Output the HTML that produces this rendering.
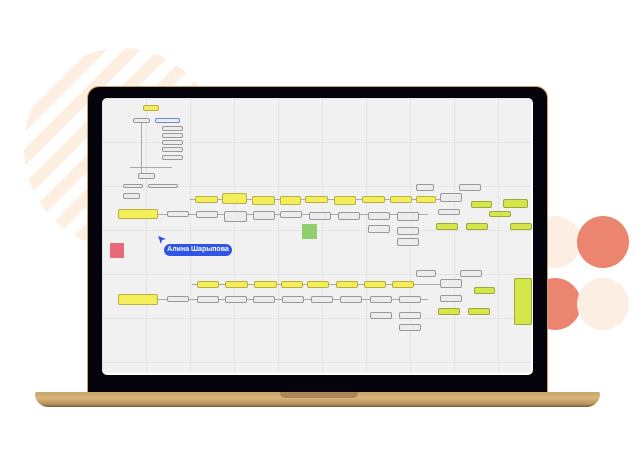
<!DOCTYPE html><html><head><meta charset="utf-8"><style>
*{margin:0;padding:0;box-sizing:border-box}
body{width:638px;height:458px;background:#fff;position:relative;overflow:hidden;font-family:"Liberation Sans",sans-serif}
.a{position:absolute}
.y{position:absolute;background:#f3ee5a;border:1px solid #b9b040;border-radius:2px;height:9px}
.g{position:absolute;background:#ececec;border:1px solid #999;border-radius:2px;height:8px}
.l{position:absolute;background:#d4e64a;border:1px solid #9aa93a;border-radius:2px;height:8px}
.h{position:absolute;height:1px;background:#aaa}
</style></head><body>
<div class="a" style="left:24px;top:48px;width:196px;height:200px;border-radius:50%;background:repeating-linear-gradient(135deg,#fdeee2 0 12px,#fff 12px 24px)"></div>
<div class="a" style="left:529px;top:216px;width:52px;height:52px;border-radius:50%;background:#fdeee4"></div>
<div class="a" style="left:577px;top:216px;width:52px;height:52px;border-radius:50%;background:#eb8570"></div>
<div class="a" style="left:529px;top:278px;width:52px;height:52px;border-radius:50%;background:#eb8570"></div>
<div class="a" style="left:577px;top:278px;width:52px;height:52px;border-radius:50%;background:#fdeee4"></div>
<!-- laptop -->
<div class="a" style="left:87px;top:86px;width:461px;height:308px;background:#05040c;border-radius:12px 12px 0 0;border:1px solid #c9a16a;border-bottom:none"></div>
<div class="a" style="left:102px;top:98px;width:431px;height:277px;background:#f1f1f1;border-radius:5px;overflow:hidden;background-image:linear-gradient(90deg,#e4e4e4 1px,transparent 1px),linear-gradient(#e4e4e4 1px,transparent 1px);background-size:44px 44px;border-right:2px solid #fff;border-bottom:2px solid #fff">
</div>
<div class="a" style="left:35px;top:392px;width:565px;height:15px;background:linear-gradient(#c9a36a,#d9b57b 40%,#b8925c 80%,#6f5a3c);border-radius:2px 2px 14px 14px"></div>
<div class="a" style="left:280px;top:392px;width:78px;height:6px;background:#a98757;border-radius:0 0 5px 5px"></div>
<!-- diagram -->
<div class="y" style="left:143px;top:105px;width:16px;height:6px"></div>
<div class="g" style="left:133px;top:118px;width:17px;height:5px"></div>
<div class="g" style="left:155px;top:118px;width:25px;height:5px;border-color:#6b8ad9"></div>
<div class="g" style="left:162px;top:126px;width:21px;height:5px"></div>
<div class="g" style="left:162px;top:133px;width:21px;height:5px"></div>
<div class="g" style="left:162px;top:140px;width:21px;height:5px"></div>
<div class="g" style="left:162px;top:147px;width:21px;height:5px"></div>
<div class="g" style="left:162px;top:155px;width:21px;height:5px"></div>
<div class="a" style="left:141px;top:123px;width:1px;height:50px;background:#aaa"></div>
<div class="h" style="left:130px;top:167px;width:42px"></div>
<div class="g" style="left:138px;top:173px;width:17px;height:6px"></div>
<div class="g" style="left:123px;top:184px;width:20px;height:4px"></div>
<div class="g" style="left:148px;top:184px;width:30px;height:4px"></div>
<div class="g" style="left:123px;top:193px;width:17px;height:6px"></div>
<div class="y" style="left:118px;top:209px;width:40px;height:10px"></div>
<div class="h" style="left:158px;top:214px;width:270px"></div>
<div class="g" style="left:167px;top:211px;width:22px;height:6px"></div>
<div class="h" style="left:190px;top:199px;width:250px"></div>
<div class="y" style="left:195px;top:196px;width:23px;height:7px"></div>
<div class="y" style="left:222px;top:193px;width:25px;height:11px"></div>
<div class="y" style="left:252px;top:196px;width:23px"></div>
<div class="y" style="left:280px;top:196px;width:21px"></div>
<div class="y" style="left:305px;top:196px;width:23px;height:7px"></div>
<div class="y" style="left:334px;top:196px;width:22px"></div>
<div class="y" style="left:362px;top:196px;width:23px;height:7px"></div>
<div class="y" style="left:390px;top:196px;width:22px;height:7px"></div>
<div class="y" style="left:416px;top:196px;width:20px;height:7px"></div>
<div class="g" style="left:196px;top:211px;width:22px;height:7px"></div>
<div class="g" style="left:224px;top:211px;width:23px;height:11px"></div>
<div class="g" style="left:253px;top:211px;width:22px;height:9px"></div>
<div class="g" style="left:280px;top:211px;width:22px;height:7px"></div>
<div class="g" style="left:309px;top:212px;width:22px"></div>
<div class="g" style="left:338px;top:212px;width:22px"></div>
<div class="g" style="left:368px;top:212px;width:22px"></div>
<div class="g" style="left:397px;top:212px;width:22px;height:9px"></div>
<div class="g" style="left:368px;top:225px;width:22px"></div>
<div class="g" style="left:397px;top:227px;width:22px"></div>
<div class="g" style="left:397px;top:238px;width:22px"></div>
<div class="a" style="left:302px;top:224px;width:15px;height:15px;background:#8fcf6e"></div>
<div class="a" style="left:110px;top:243px;width:14px;height:15px;background:#e66a7a"></div>
<div class="g" style="left:416px;top:184px;width:18px;height:7px"></div>
<div class="g" style="left:459px;top:184px;width:22px;height:7px"></div>
<div class="g" style="left:440px;top:193px;width:22px;height:9px"></div>
<div class="g" style="left:438px;top:209px;width:22px;height:6px"></div>
<div class="l" style="left:471px;top:201px;width:21px;height:7px"></div>
<div class="l" style="left:503px;top:199px;width:25px;height:9px"></div>
<div class="l" style="left:489px;top:211px;width:22px;height:6px"></div>
<div class="l" style="left:436px;top:223px;width:22px;height:7px"></div>
<div class="l" style="left:466px;top:223px;width:22px;height:7px"></div>
<div class="l" style="left:510px;top:223px;width:22px;height:7px"></div>
<!-- row 2 -->
<div class="y" style="left:118px;top:294px;width:40px;height:11px"></div>
<div class="h" style="left:158px;top:299px;width:270px"></div>
<div class="h" style="left:192px;top:284px;width:250px"></div>
<div class="g" style="left:167px;top:296px;width:22px;height:6px"></div>
<div class="y" style="left:197px;top:281px;width:22px;height:7px"></div>
<div class="y" style="left:225px;top:281px;width:23px;height:7px"></div>
<div class="y" style="left:254px;top:281px;width:23px;height:7px"></div>
<div class="y" style="left:281px;top:281px;width:22px;height:7px"></div>
<div class="y" style="left:307px;top:281px;width:22px;height:7px"></div>
<div class="y" style="left:336px;top:281px;width:22px;height:7px"></div>
<div class="y" style="left:364px;top:281px;width:22px;height:7px"></div>
<div class="y" style="left:392px;top:281px;width:22px;height:7px"></div>
<div class="g" style="left:197px;top:296px;width:22px;height:7px"></div>
<div class="g" style="left:225px;top:296px;width:22px;height:7px"></div>
<div class="g" style="left:253px;top:296px;width:22px;height:7px"></div>
<div class="g" style="left:282px;top:296px;width:22px;height:7px"></div>
<div class="g" style="left:311px;top:296px;width:22px;height:7px"></div>
<div class="g" style="left:340px;top:296px;width:22px;height:7px"></div>
<div class="g" style="left:370px;top:296px;width:22px;height:7px"></div>
<div class="g" style="left:399px;top:296px;width:22px;height:7px"></div>
<div class="g" style="left:370px;top:312px;width:22px;height:7px"></div>
<div class="g" style="left:399px;top:312px;width:22px;height:7px"></div>
<div class="g" style="left:399px;top:324px;width:22px;height:7px"></div>
<div class="g" style="left:416px;top:270px;width:20px;height:7px"></div>
<div class="g" style="left:460px;top:270px;width:22px;height:7px"></div>
<div class="g" style="left:440px;top:279px;width:22px;height:9px"></div>
<div class="g" style="left:440px;top:295px;width:22px;height:7px"></div>
<div class="l" style="left:474px;top:287px;width:21px;height:7px"></div>
<div class="l" style="left:438px;top:308px;width:22px;height:7px"></div>
<div class="l" style="left:468px;top:308px;width:22px;height:7px"></div>
<div class="l" style="left:514px;top:278px;width:18px;height:47px"></div>
<!-- cursor -->
<svg class="a" style="left:157px;top:235px" width="10" height="10" viewBox="0 0 10 10"><path d="M1 1 L9 4 L5 5 L4 9 Z" fill="#2d4fdc"/></svg>
<div class="a" style="left:164px;top:244px;width:68px;height:12px;background:#2f55e6;border-radius:6px;color:#fff;font-size:7px;font-weight:bold;line-height:12px;text-align:center;white-space:nowrap">Алина Шарыпова</div>
</body></html>
